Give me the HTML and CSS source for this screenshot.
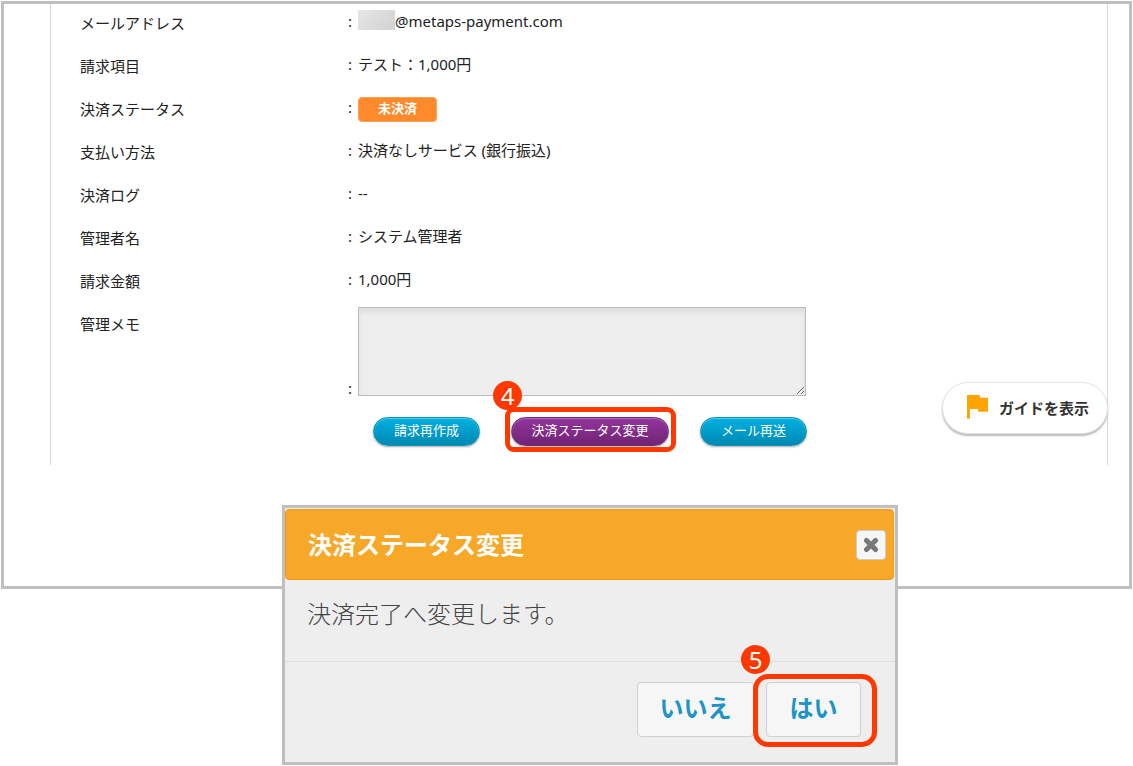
FILE: index.html
```
<!DOCTYPE html>
<html lang="ja">
<head>
  <meta charset="UTF-8">
  <meta name="viewport" content="width=device-width, initial-scale=1.0">
  <title>決済ステータス変更</title>
  <link rel="stylesheet" href="styles.css">
</head>
<body>
  <main class="page">
    <section class="detail">
      <dl class="rows">
        <div class="row">
          <dt>メールアドレス</dt>
          <dd><span class="colon">:</span><span class="masked"></span>@metaps-payment.com</dd>
        </div>
        <div class="row">
          <dt>請求項目</dt>
          <dd><span class="colon">:</span>テスト：1,000円</dd>
        </div>
        <div class="row">
          <dt>決済ステータス</dt>
          <dd><span class="colon">:</span><span class="status">未決済</span></dd>
        </div>
        <div class="row">
          <dt>支払い方法</dt>
          <dd><span class="colon">:</span>決済なしサービス (銀行振込)</dd>
        </div>
        <div class="row">
          <dt>決済ログ</dt>
          <dd><span class="colon">:</span>--</dd>
        </div>
        <div class="row">
          <dt>管理者名</dt>
          <dd><span class="colon">:</span>システム管理者</dd>
        </div>
        <div class="row">
          <dt>請求金額</dt>
          <dd><span class="colon">:</span>1,000円</dd>
        </div>
        <div class="row">
          <dt><label for="memo">管理メモ</label></dt>
          <dd class="memo"><span class="colon">:</span><textarea id="memo"></textarea></dd>
        </div>
      </dl>

      <div class="actions">
        <button type="button" class="pill">請求再作成</button>
        <div class="marked">
          <button type="button" class="pill purple">決済ステータス変更</button>
          <span class="frame"></span>
          <span class="step">4</span>
        </div>
        <button type="button" class="pill">メール再送</button>
      </div>

      <button type="button" class="guide">
        <svg width="22" height="24" viewBox="0 0 22 24" aria-hidden="true">
          <path d="M0 0h12.500l.7 2.700H21v14h-9.500l-.7-2.700H3v9.500H0z" fill="#ffa400"/>
        </svg>
        ガイドを表示
      </button>
    </section>
  </main>

  <div class="modal" role="dialog" aria-labelledby="modal-title">
    <div class="modal-header">
      <h2 id="modal-title">決済ステータス変更</h2>
      <button type="button" class="close" aria-label="閉じる">
        <svg width="16" height="16" viewBox="0 0 16 16" aria-hidden="true">
          <path d="M3.500 3.500l9 9M12.500 3.500l-9 9" stroke="#777" stroke-width="5" stroke-linecap="round"/>
        </svg>
      </button>
    </div>
    <p class="modal-body">決済完了へ変更します。</p>
    <div class="modal-footer">
      <button type="button" class="choice no">いいえ</button>
      <div class="marked large">
        <button type="button" class="choice">はい</button>
        <span class="frame"></span>
        <span class="step">5</span>
      </div>
    </div>
  </div>
</body>
</html>
```
FILE: styles.css
```
* {
  margin: 0;
  padding: 0;
  box-sizing: border-box;
}

body {
  padding: 1px;
  background: #fff;
  color: #222;
  font-family: "Noto Sans", "Noto Sans CJK JP", sans-serif;
  font-size: 15px;
}

button,
textarea {
  font-family: inherit;
}

.page {
  border: 3px solid #bfbfbf;
  padding: 0 21px 121px 46px;
}

.detail {
  position: relative;
  border: solid #d9d9d9;
  border-width: 0 1px;
  padding: 0 29px 19px;
}

.row {
  display: grid;
  grid-template-columns: 268px 1fr;
  min-height: 43px;
}

dt {
  line-height: 39px;
}

dd {
  display: flex;
  align-items: center;
  height: 34px;
  line-height: 34px;
}

.colon {
  width: 10px;
}

.masked {
  width: 37px;
  height: 20px;
  margin-bottom: 2px;
  background: linear-gradient(135deg, #e6e6e6, #d2d2d2);
}

.status {
  width: 79px;
  height: 25px;
  margin-top: 4px;
  border: 1px solid #ffa04d;
  border-radius: 4px;
  background: #ff8a2b;
  color: #fff;
  font-size: 13px;
  font-weight: 700;
  line-height: 20px;
  text-align: center;
}

.memo {
  height: auto;
  align-items: flex-end;
  padding-top: 2px;
  line-height: 16px;
}

textarea {
  width: 448px;
  height: 89px;
  border: 1px solid #bbb;
  background: #eee;
  box-shadow: inset 0 4px 5px #ddd;
  resize: both;
}

.actions {
  display: flex;
  gap: 31px;
  padding: 21px 0 0 293px;
}

.pill {
  display: block;
  width: 107px;
  height: 29px;
  padding-bottom: 4px;
  border: 1px solid #0c93b9;
  border-radius: 15px;
  background: linear-gradient(#00b0e0, #0089b4);
  box-shadow: inset 0 1px 1px #5cc8e6, 0 1px 2px #aaa;
  color: #fff;
  font-size: 13px;
  white-space: nowrap;
}

.purple {
  width: 158px;
  border-color: #6d2a76;
  background: linear-gradient(#93359c, #702475);
  box-shadow: inset 0 1px 1px #b56cbc, 0 1px 2px #aaa;
}

.marked {
  position: relative;
}

.frame {
  position: absolute;
  inset: -10px -7px -6px -6px;
  border: 5px solid #ff3800;
  border-radius: 9px;
  pointer-events: none;
}

.step {
  position: absolute;
  top: -36px;
  left: -18px;
  width: 29px;
  height: 29px;
  border-radius: 50%;
  background: #ff3800;
  color: #fff;
  font-size: 24px;
  line-height: 29px;
  text-align: center;
}

.guide {
  position: absolute;
  top: 378px;
  right: -1px;
  display: flex;
  align-items: center;
  gap: 10px;
  width: 166px;
  height: 52px;
  padding: 0 0 2px 24px;
  border: 1px solid #e4e4e4;
  border-radius: 26px;
  background: #fff;
  box-shadow: 0 2px 2px #bbb;
  color: #333;
  font-size: 15px;
  font-weight: 700;
  white-space: nowrap;
}

.modal {
  position: relative;
  width: 616px;
  margin: -84px auto 0 281px;
  border: 3px solid #bfbfbf;
  background: #eee;
}

.modal-header {
  display: flex;
  align-items: center;
  justify-content: space-between;
  height: 71px;
  margin: 1px 1px 0 0;
  padding: 0 7px 0 22px;
  border: 1px solid #ed9a1a;
  border-radius: 4px;
  background: #f7a828;
}

.modal-header h2 {
  color: #fff;
  font-size: 24px;
  line-height: 36px;
}

.close {
  display: flex;
  align-items: center;
  justify-content: center;
  width: 30px;
  height: 30px;
  border: 1px solid #ccc;
  border-radius: 4px;
  background: #f6f6f6;
}

.modal-body {
  padding: 16px 22px 29px;
  border-bottom: 1px solid #ddd;
  color: #444;
  font-size: 24px;
  font-weight: 300;
  line-height: 36px;
}

.modal-footer {
  display: flex;
  justify-content: flex-end;
  gap: 12px;
  padding: 20px 34px 25px;
}

.choice {
  display: block;
  width: 95px;
  height: 55px;
  padding-bottom: 6px;
  border: 1px solid #d0d0d0;
  border-radius: 4px;
  background: #f6f6f6;
  color: #1c94c4;
  font-size: 24px;
  font-weight: 700;
}

.no {
  width: 117px;
}

.large .frame {
  inset: -8px -16px -10px -13px;
  border-radius: 15px;
}

.large .step {
  top: -37px;
  left: -25px;
}
```
